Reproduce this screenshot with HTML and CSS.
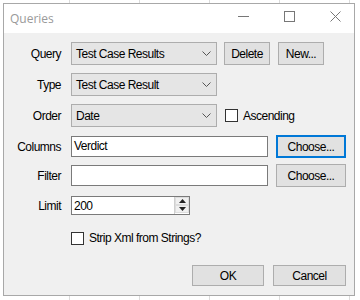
FILE: index.html
```html
<!DOCTYPE html>
<html lang="en">
<head>
    <meta charset="UTF-8">
    <title>Queries</title>
    <link rel="stylesheet" href="styles.css">
</head>
<body>
    <div class="window">
        <!-- Barra de título -->
        <div class="titlebar">
            <span class="title">Queries</span>
            <span class="caption-btn">
                <svg width="11" height="11" viewBox="0 0 11 11"><line x1="0" y1="5.5" x2="11" y2="5.5" stroke="#777" stroke-width="1"/></svg>
            </span>
            <span class="caption-btn">
                <svg width="11" height="11" viewBox="0 0 11 11"><rect x="0.5" y="0.5" width="10" height="10" fill="none" stroke="#777" stroke-width="1"/></svg>
            </span>
            <span class="caption-btn">
                <svg width="11" height="11" viewBox="0 0 11 11"><path d="M0.5 0.5 L10.5 10.5 M10.5 0.5 L0.5 10.5" stroke="#777" stroke-width="1"/></svg>
            </span>
        </div>

        <div class="client">
            <div class="row row-query">
                <label class="lbl">Query</label>
                <div class="combo combo-query">
                    <span>Test Case Results</span>
                    <svg class="arrow" width="9" height="5" viewBox="0 0 9 5"><polyline points="0.5,0.5 4.5,4.5 8.5,0.5" fill="none" stroke="#555" stroke-width="1"/></svg>
                </div>
                <button class="btn btn-small">Delete</button>
                <button class="btn btn-small">New...</button>
            </div>

            <div class="row row-type">
                <label class="lbl">Type</label>
                <div class="combo">
                    <span>Test Case Result</span>
                    <svg class="arrow" width="9" height="5" viewBox="0 0 9 5"><polyline points="0.5,0.5 4.5,4.5 8.5,0.5" fill="none" stroke="#555" stroke-width="1"/></svg>
                </div>
            </div>

            <div class="row row-order">
                <label class="lbl">Order</label>
                <div class="combo">
                    <span>Date</span>
                    <svg class="arrow" width="9" height="5" viewBox="0 0 9 5"><polyline points="0.5,0.5 4.5,4.5 8.5,0.5" fill="none" stroke="#555" stroke-width="1"/></svg>
                </div>
                <span class="check check-asc"></span>
                <span class="check-text">Ascending</span>
            </div>

            <div class="row row-columns">
                <label class="lbl">Columns</label>
                <div class="textbox">Verdict</div>
                <button class="btn btn-choose focused">Choose...</button>
            </div>

            <div class="row row-filter">
                <label class="lbl">Filter</label>
                <div class="textbox"></div>
                <button class="btn btn-choose">Choose...</button>
            </div>

            <div class="row row-limit">
                <label class="lbl">Limit</label>
                <div class="numeric">
                    <span class="num-value">200</span>
                    <span class="spin">
                        <span class="spin-btn"><svg width="7" height="4" viewBox="0 0 7 4"><polygon points="3.5,0 7,4 0,4" fill="#222"/></svg></span>
                        <span class="spin-btn"><svg width="7" height="4" viewBox="0 0 7 4"><polygon points="0,0 7,0 3.5,4" fill="#222"/></svg></span>
                    </span>
                </div>
            </div>

            <div class="row row-strip">
                <span class="check"></span>
                <span class="check-text">Strip Xml from Strings?</span>
            </div>

            <div class="footer">
                <button class="btn btn-ok">OK</button>
                <button class="btn btn-cancel">Cancel</button>
            </div>
        </div>
    </div>
</body>
</html>
```

FILE: styles.css
```css
html, body {
    margin: 0;
    padding: 0;
}
body {
    width: 360px;
    height: 300px;
    overflow: hidden;
    background-color: #fff;
    background-image: repeating-linear-gradient(90deg, transparent 0, transparent 69px, #dcdcdc 69px, #dcdcdc 70px, transparent 70px, transparent 64px);
    font-family: "Liberation Sans", Arial, sans-serif;
    font-size: 12px;
    letter-spacing: -0.5px;
    color: #000;
}
.window {
    margin: 3px 0 0 3px;
    width: 350px;
    height: 291px;
    border: 1px solid #a8a8a8;
    background: #f0f0f0;
    display: flex;
    flex-direction: column;
}
.titlebar {
    height: 29px;
    background: #fff;
    display: flex;
    align-items: center;
    flex-shrink: 0;
}
.title {
    font-family: "Open Sans", "Noto Sans", sans-serif;
    font-size: 12px;
    letter-spacing: 0;
    color: #9a9a9a;
    margin-left: 6px;
    margin-top: -1px;
    flex-grow: 1;
}
.caption-btn {
    display: flex;
    width: 11px;
    height: 11px;
    margin-right: 35px;
    margin-top: -4px;
}
.caption-btn:last-child {
    margin-right: 13px;
}
.client {
    flex-grow: 1;
    padding-top: 9px;
    display: flex;
    flex-direction: column;
}
.row {
    display: flex;
    align-items: center;
}
.lbl {
    width: 57px;
    text-align: right;
    margin-right: 10px;
}
.combo {
    width: 140px;
    height: 21px;
    border: 1px solid #adadad;
    background: #e5e5e5;
    display: flex;
    align-items: center;
    padding-left: 4px;
}
.combo span {
    flex-grow: 1;
}
.combo .arrow {
    margin-right: 5px;
}
.btn {
    font-family: "Liberation Sans", Arial, sans-serif;
    font-size: 12px;
    letter-spacing: -0.5px;
    color: #000;
    background: #e1e1e1;
    border: 1px solid #adadad;
    padding: 0;
    height: 23px;
    box-sizing: border-box;
}
.btn.focused {
    border: 2px solid #0078d7;
}
.btn-small {
    width: 46px;
    margin-left: 7px;
}
.btn-small + .btn-small {
    margin-left: 8px;
}
.row-type {
    margin-top: 8px;
}
.row-order {
    margin-top: 8px;
}
.check {
    width: 11px;
    height: 11px;
    border: 1px solid #333;
    background: #fff;
    display: inline-block;
}
.check-asc {
    margin-left: 8px;
}
.check-text {
    margin-left: 5px;
}
.row-columns {
    margin-top: 8px;
}
.textbox {
    width: 197px;
    height: 21px;
    border: 1px solid #7a7a7a;
    background: #fff;
    padding-left: 2px;
    box-sizing: border-box;
    line-height: 19px;
}
.btn-choose {
    width: 70px;
    margin-left: 8px;
}
.row-filter {
    margin-top: 6px;
}
.row-limit {
    margin-top: 9px;
}
.numeric {
    width: 119px;
    height: 19px;
    box-sizing: border-box;
    border: 1px solid #7a7a7a;
    background: #fff;
    display: flex;
    align-items: center;
}
.num-value {
    flex-grow: 1;
    padding-left: 2px;
}
.spin {
    display: flex;
    flex-direction: column;
    height: 17px;
    border-left: 1px solid #cfcfcf;
}
.spin-btn {
    width: 14px;
    height: 8px;
    display: flex;
    align-items: center;
    justify-content: center;
    background: #f0f0f0;
    border: 0.5px solid #ddd;
    box-sizing: border-box;
}
.row-strip {
    margin-top: 16px;
    padding-left: 67px;
}
.footer {
    margin-top: 20px;
    display: flex;
    justify-content: flex-end;
    padding-right: 8px;
}
.btn-ok {
    width: 72px;
    height: 21px;
}
.btn-cancel {
    width: 73px;
    height: 21px;
    margin-left: 9px;
}
```
